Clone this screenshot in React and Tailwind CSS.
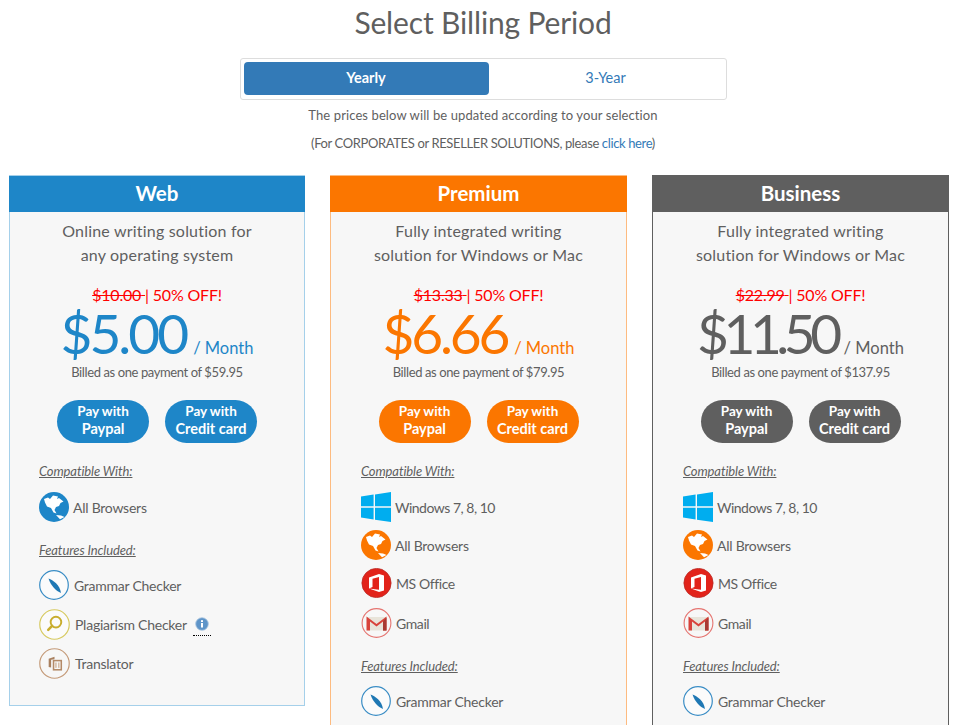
const FONT = "font-['Lato','Liberation_Sans',sans-serif]";

function Globe({ c }) {
  return (
    <svg width="30" height="30" viewBox="0 0 30 30" className="shrink-0">
      <circle cx="15" cy="15" r="15" fill={c} />
      <path d="M5 7 L9 5.5 L11 7 L14 3.5 L19 4.5 L18 7 L20 6 L24.5 9.5 L21.5 11 L20 14 L17 15 L15.5 18 L17.5 21.5 L14.5 20.5 L12 16 L8 14.5 L6 10.5 Z" fill="#fff" />
      <path d="M17 23 L22 23.5 L25.5 25 L21 27.2 Z" fill="#fff" />
    </svg>
  );
}
function Windows() {
  return (
    <svg width="30" height="30" viewBox="0 0 30 30" className="shrink-0">
      <path d="M0 4.5 L12.6 2.6 V14.3 H0 Z M14 2.4 L30 0 V14.3 H14 Z M0 15.7 H12.6 V27.5 L0 25.6 Z M14 15.7 H30 V30 L14 27.7 Z" fill="#00adef" />
    </svg>
  );
}
function Office() {
  return (
    <svg width="31" height="30" viewBox="0 0 31 30" className="shrink-0">
      <circle cx="15.5" cy="15" r="14.6" fill="#e2231a" stroke="#b92b26" strokeWidth="0.8" />
      <path d="M8 9.5 L18 6 L23 7.5 V22.5 L18 24 L8 20.5 L18 21.8 V9 L11.5 10.8 V19 L8 20.5 Z" fill="#fff" />
    </svg>
  );
}
function Gmail() {
  return (
    <svg width="31" height="30" viewBox="0 0 31 30" className="shrink-0">
      <circle cx="15.5" cy="15" r="14.4" fill="#f7f7f7" stroke="#e57470" strokeWidth="1.1" />
      <path d="M6 9 H25 V22.5 H6 Z" fill="#e8e4da" />
      <path d="M5.5 8.5 L15.5 16 L25.5 8.5 V22.5 H22 V13.5 L15.5 18.5 L9 13.5 V22.5 H5.5 Z" fill="#d8423a" />
      <path d="M22 13.5 L25.5 9.5 V22.5 H22 Z" fill="#a83a33" />
    </svg>
  );
}
function Quill() {
  return (
    <svg width="30" height="30" viewBox="0 0 30 30" className="shrink-0">
      <circle cx="15" cy="15" r="14.3" fill="#fbfbfb" stroke="#3a8dc5" strokeWidth="1.2" />
      <path d="M9.5 8.5 C14 10 21 15 22 23 C17 21 12 16 9.5 8.5 Z" fill="#1f78b4" />
    </svg>
  );
}
function Magnifier() {
  return (
    <svg width="31" height="31" viewBox="0 0 32 32" className="shrink-0">
      <circle cx="16" cy="16" r="15.2" fill="#fbfbfb" stroke="#d6c95e" strokeWidth="1.2" />
      <circle cx="17.5" cy="13.5" r="5.5" fill="none" stroke="#c8ad2e" strokeWidth="2" />
      <path d="M13.5 17.5 L9.5 21.5" stroke="#c8ad2e" strokeWidth="2.6" strokeLinecap="round" />
    </svg>
  );
}
function Translator() {
  return (
    <svg width="31" height="31" viewBox="0 0 32 32" className="shrink-0">
      <circle cx="16" cy="16" r="15.2" fill="#f7f7f7" stroke="#c49a78" strokeWidth="1.2" />
      <path d="M10 11 L16 9 V11.5 L12.5 12.2 V20 L10 19.5 Z" fill="#a9805f" />
      <rect x="15" y="13" width="8" height="9.5" fill="none" stroke="#b48a68" strokeWidth="1.6" />
      <path d="M17.5 15 V20.5 M20.5 15 V20.5" stroke="#c49a78" strokeWidth="1" />
    </svg>
  );
}
function Info() {
  return (
    <svg width="14" height="14" viewBox="0 0 14 14" className="block">
      <circle cx="7" cy="7" r="6.3" fill="#5e94c8" stroke="#a9c5e0" strokeWidth="0.8" />
      <rect x="6" y="6" width="2" height="4.5" fill="#fff" />
      <rect x="6" y="3.2" width="2" height="1.8" fill="#fff" />
    </svg>
  );
}

function Row({ icon, label, gap = "gap-[4px]", mb = "mb-[8px]", track = "tracking-[-0.25px]", extra }) {
  return (
    <div className={`flex items-center ${gap} h-[30px] ${mb} text-[14px] ${track} text-[#5f5f5f]`}>
      {icon}
      <span>{label}</span>
      {extra}
    </div>
  );
}
function Heading({ children, mb }) {
  return <div className={`text-[13px] italic underline tracking-[-0.1px] text-[#5f5f5f] leading-[18px] ${mb}`}>{children}</div>;
}
function PayBtn({ a, b, bg }) {
  return (
    <button className={`w-[92px] h-[43px] rounded-[22px] ${bg} text-white font-bold leading-[18px] flex flex-col items-center justify-center pb-[4px]`}>
      <span className="text-[13.5px]">{a}</span>
      <span className="text-[14.5px]">{b}</span>
    </button>
  );
}
function Card({ name, head, border, text, bg, desc1, desc2, old, price, total, compat, features, h, pl, priceTrack }) {
  return (
    <div className={`border ${border} bg-[#f7f7f7] ${h}`}>
      <div className={`${head} h-[36px] -mx-px text-white text-[20.5px] font-bold flex items-center justify-center pb-[2px]`}>{name}</div>
      <div className="text-center text-[16px] tracking-[0.2px] leading-[24px] text-[#5f5f5f] mt-[7px]">
        <div>{desc1}</div>
        <div>{desc2}</div>
      </div>
      <div className="text-center text-[16px] tracking-[-0.2px] leading-[20px] text-[#ff0000] mt-[18px]">
        <span className="line-through">{old} </span>| 50% OFF!
      </div>
      <div className={`flex items-baseline justify-center gap-[7px] ${text} leading-[32px] mt-[12px]`}>
        <span className={`text-[55px] ${priceTrack}`}>{price}</span>
        <span className="text-[16.5px]">/ Month</span>
      </div>
      <div className="text-center text-[13px] tracking-[-0.4px] leading-[18px] text-[#5f5f5f] mt-[-1px]">Billed as one payment of {total}</div>
      <div className="flex justify-center gap-[16px] mt-[19px]">
        <PayBtn a="Pay with" b="Paypal" bg={bg} />
        <PayBtn a="Pay with" b="Credit card" bg={bg} />
      </div>
      <div className={`${pl} mt-[19px]`}>
        <Heading mb="mb-[12px]">Compatible With:</Heading>
        {compat}
        <div className="mt-[19px]">
          <Heading mb="mb-[11px]">Features Included:</Heading>
          {features}
        </div>
      </div>
    </div>
  );
}

export default function App() {
  const proCompat = (c) => (
    <>
      <Row icon={<Windows />} label="Windows 7, 8, 10" track="tracking-[-0.5px]" />
      <Row icon={<Globe c={c} />} label="All Browsers" />
      <Row icon={<Office />} label="MS Office" mb="mb-[10px]" track="tracking-[-0.4px]" />
      <Row icon={<Gmail />} label="Gmail" mb="mb-0" track="tracking-[-0.4px]" />
    </>
  );
  return (
    <div className={`${FONT} h-[725px] overflow-hidden bg-white text-[#5f5f5f]`}>
      <div className="pl-[4px] text-center">
        <h1 className="text-[30px] leading-[44px] tracking-[-0.15px]">Select Billing Period</h1>
        <div className="w-[487px] h-[42px] mx-auto mt-[14px] border border-[#dddddd] rounded-[3px] flex p-[3px] text-[14.5px]">
          <div className="w-[245px] h-[33px] bg-[#337ab7] rounded-[4px] text-white font-bold flex items-center justify-center pb-[2px]">Yearly</div>
          <div className="flex-1 h-[33px] text-[#337ab7] flex items-center justify-center pb-[2px]">3-Year</div>
        </div>
        <p className="text-[13px] tracking-[0.1px] leading-[18px] mt-[6px]">The prices below will be updated according to your selection</p>
        <p className="text-[13px] tracking-[-0.37px] leading-[18px] mt-[10px]">(For CORPORATES or RESELLER SOLUTIONS, please <span className="text-[#337ab7]">click here</span>)</p>
      </div>
      <div className="grid grid-cols-[296px_297px_297px] gap-[25px] ml-[9px] mt-[23px] items-start">
        <Card name="Web" h="h-[531px]" pl="pl-[29px]" priceTrack="tracking-[-3px]" head="bg-[#1e86c8]" border="border-[#a5d0ea]" text="text-[#1e86c8]" bg="bg-[#1e86c8]"
          desc1="Online writing solution for" desc2="any operating system" old="$10.00" price="$5.00" total="$59.95"
          compat={<Row icon={<Globe c="#1e86c8" />} label="All Browsers" mb="mb-0" />}
          features={<>
            <Row icon={<Quill />} label="Grammar Checker" gap="gap-[5px]" mb="mb-[9px]" />
            <Row icon={<Magnifier />} label="Plagiarism Checker" gap="gap-[5px]" mb="mb-[9px]" extra={<span className="ml-[1px] border-b border-dotted border-black h-[23px] px-[2px] pt-[4px]"><Info /></span>} />
            <Row icon={<Translator />} label="Translator" gap="gap-[5px]" mb="mb-0" />
          </>}
        />
        <Card name="Premium" h="h-[620px]" pl="pl-[30px]" priceTrack="tracking-[-3.2px]" head="bg-[#fb7600]" border="border-[#fdbb80]" text="text-[#fb7600]" bg="bg-[#fb7600]"
          desc1="Fully integrated writing" desc2="solution for Windows or Mac" old="$13.33" price="$6.66" total="$79.95"
          compat={proCompat("#fb7600")}
          features={<Row icon={<Quill />} label="Grammar Checker" gap="gap-[5px]" />}
        />
        <Card name="Business" h="h-[620px]" pl="pl-[30px]" priceTrack="tracking-[-5.5px]" head="bg-[#5f5f5f]" border="border-[#5f5f5f]" text="text-[#5f5f5f]" bg="bg-[#5f5f5f]"
          desc1="Fully integrated writing" desc2="solution for Windows or Mac" old="$22.99" price="$11.50" total="$137.95"
          compat={proCompat("#fb7600")}
          features={<Row icon={<Quill />} label="Grammar Checker" gap="gap-[5px]" />}
        />
      </div>
    </div>
  );
}
